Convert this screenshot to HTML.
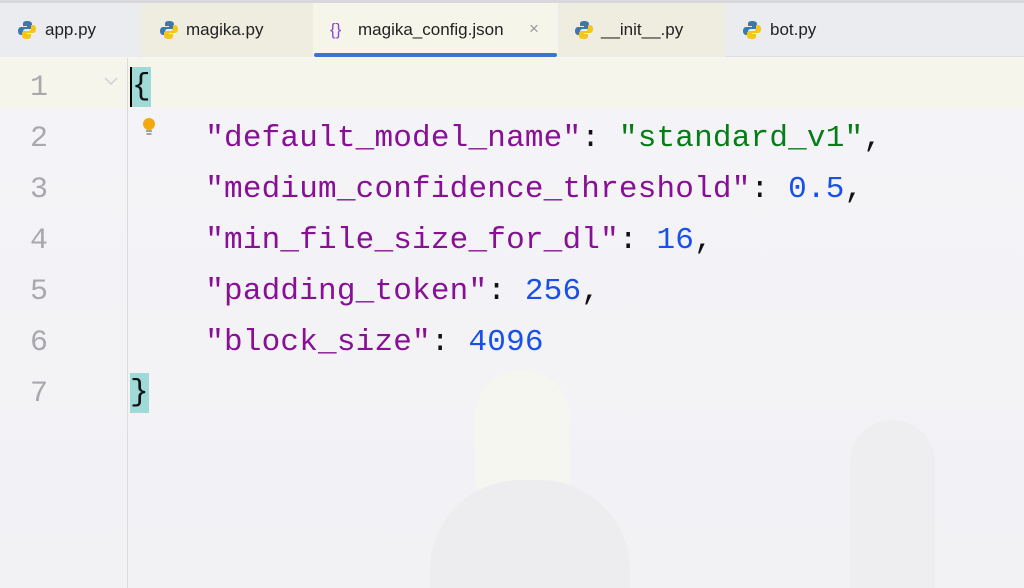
<!DOCTYPE html>
<html><head><style>
html,body{margin:0;width:1024px;height:588px;overflow:hidden}
body{background:#f6f6f9;position:relative;font-family:"Liberation Sans",sans-serif}
.tabs{position:absolute;left:0;top:0;width:1024px;height:57px;background:#ebecf0;border-bottom:1px solid #dcdde2;border-top:3px solid #d8d8dc;box-sizing:border-box}
.tab{position:absolute;top:0;height:54px;font-size:17px;color:#222;line-height:54px}
.tab svg{position:absolute;top:17px}
.tab span{position:absolute;white-space:nowrap;top:0}
.ed{position:absolute;top:58px;left:0;width:1024px;height:530px;background:linear-gradient(#f4f4f8,#f2f2f5)}
.gut{position:absolute;left:127px;top:58px;width:1px;height:530px;background:#dcdcdf}
.cur{position:absolute;left:0;top:58px;width:1024px;height:50px;background:#f6f5ec}
.ln{position:absolute;left:0;width:48px;text-align:right;font-family:"Liberation Mono",monospace;font-size:30px;color:#a8a8ad}
.code{position:absolute;left:130px;font-family:"Liberation Mono",monospace;font-size:31px;color:#111;white-space:pre;letter-spacing:0.2px}
.k{color:#871094}.s{color:#067d17}.n{color:#1750eb}
.br{background:#9fd9d8;display:inline-block;height:40px;line-height:40px;vertical-align:middle}
</style></head><body>
<div class="tabs">
 <div class="tab" style="left:0;width:140px;background:#ebecf0">
  <svg width="20" height="20" viewBox="0 0 20 20" style="left:17px"><path d="M10 1c-4 0-4 2-4 3v2h4v1H4C2 7 1 9 1 11s1 4 3 4h2v-3c0-2 1-3 3-3h4c1 0 2-1 2-2V4c0-2-2-3-5-3z" fill="#3c78aa"/><path d="M10 19c4 0 4-2 4-3v-2h-4v-1h6c2 0 3-2 3-4s-1-4-3-4h-2v3c0 2-1 3-3 3H7c-1 0-2 1-2 2v3c0 2 2 3 5 3z" fill="#f5c518"/></svg>
  <span style="left:45px">app.py</span></div>
 <div class="tab" style="left:141px;width:172px;background:#eeede0">
  <svg width="20" height="20" viewBox="0 0 20 20" style="left:18px"><path d="M10 1c-4 0-4 2-4 3v2h4v1H4C2 7 1 9 1 11s1 4 3 4h2v-3c0-2 1-3 3-3h4c1 0 2-1 2-2V4c0-2-2-3-5-3z" fill="#3c78aa"/><path d="M10 19c4 0 4-2 4-3v-2h-4v-1h6c2 0 3-2 3-4s-1-4-3-4h-2v3c0 2-1 3-3 3H7c-1 0-2 1-2 2v3c0 2 2 3 5 3z" fill="#f5c518"/></svg>
  <span style="left:45px">magika.py</span></div>
 <div class="tab" style="left:313px;width:245px;background:#f6f5ea">
  <span style="left:17px;color:#8e44d6">{}</span>
  <span style="left:45px">magika_config.json</span>
  <span style="left:216px;top:-1px;color:#999">×</span>
  <div style="position:absolute;left:1px;right:1px;bottom:0;height:4px;background:#3d74d4;border-radius:2px"></div></div>
 <div class="tab" style="left:559px;width:166px;background:#eeede0">
  <svg width="20" height="20" viewBox="0 0 20 20" style="left:15px"><path d="M10 1c-4 0-4 2-4 3v2h4v1H4C2 7 1 9 1 11s1 4 3 4h2v-3c0-2 1-3 3-3h4c1 0 2-1 2-2V4c0-2-2-3-5-3z" fill="#3c78aa"/><path d="M10 19c4 0 4-2 4-3v-2h-4v-1h6c2 0 3-2 3-4s-1-4-3-4h-2v3c0 2-1 3-3 3H7c-1 0-2 1-2 2v3c0 2 2 3 5 3z" fill="#f5c518"/></svg>
  <span style="left:42px">__init__.py</span></div>
 <div class="tab" style="left:725px;width:299px">
  <svg width="20" height="20" viewBox="0 0 20 20" style="left:17px"><path d="M10 1c-4 0-4 2-4 3v2h4v1H4C2 7 1 9 1 11s1 4 3 4h2v-3c0-2 1-3 3-3h4c1 0 2-1 2-2V4c0-2-2-3-5-3z" fill="#3c78aa"/><path d="M10 19c4 0 4-2 4-3v-2h-4v-1h6c2 0 3-2 3-4s-1-4-3-4h-2v3c0 2-1 3-3 3H7c-1 0-2 1-2 2v3c0 2 2 3 5 3z" fill="#f5c518"/></svg>
  <span style="left:45px">bot.py</span></div>
</div>
<div class="ed"></div>
<div class="cur"></div>
<div style="position:absolute;left:475px;top:370px;width:95px;height:150px;border-radius:48px;background:#f6f6f0"></div>
<div style="position:absolute;left:430px;top:480px;width:200px;height:108px;border-radius:90px 90px 0 0;background:#ededef"></div>
<div style="position:absolute;left:850px;top:420px;width:85px;height:168px;border-radius:42px 42px 0 0;background:#eeeef1"></div>
<div class="gut"></div>
<svg style="position:absolute;left:103px;top:76px" width="16" height="10"><path d="M2 2l6 6 6-6" fill="none" stroke="#d0d0d4" stroke-width="1.5"/></svg>
<svg style="position:absolute;left:139px;top:117px" width="20" height="20"><circle cx="10" cy="7" r="6" fill="#f2a90d"/><path d="M7 14h6M7.5 17h5" stroke="#888" stroke-width="1.5"/></svg>
<div style="position:absolute;left:0;top:63px;line-height:51px">
<div class="ln" style="top:0">1</div><div class="ln" style="top:51px">2</div><div class="ln" style="top:102px">3</div><div class="ln" style="top:153px">4</div><div class="ln" style="top:204px">5</div><div class="ln" style="top:255px">6</div><div class="ln" style="top:306px">7</div>
</div>
<div class="code" style="top:62px;line-height:51px"><span class="br" style="border-left:2px solid #000">{</span>
    <span class="k">"default_model_name"</span>: <span class="s">"standard_v1"</span>,
    <span class="k">"medium_confidence_threshold"</span>: <span class="n">0.5</span>,
    <span class="k">"min_file_size_for_dl"</span>: <span class="n">16</span>,
    <span class="k">"padding_token"</span>: <span class="n">256</span>,
    <span class="k">"block_size"</span>: <span class="n">4096</span>
<span class="br">}</span></div>
</body></html>
